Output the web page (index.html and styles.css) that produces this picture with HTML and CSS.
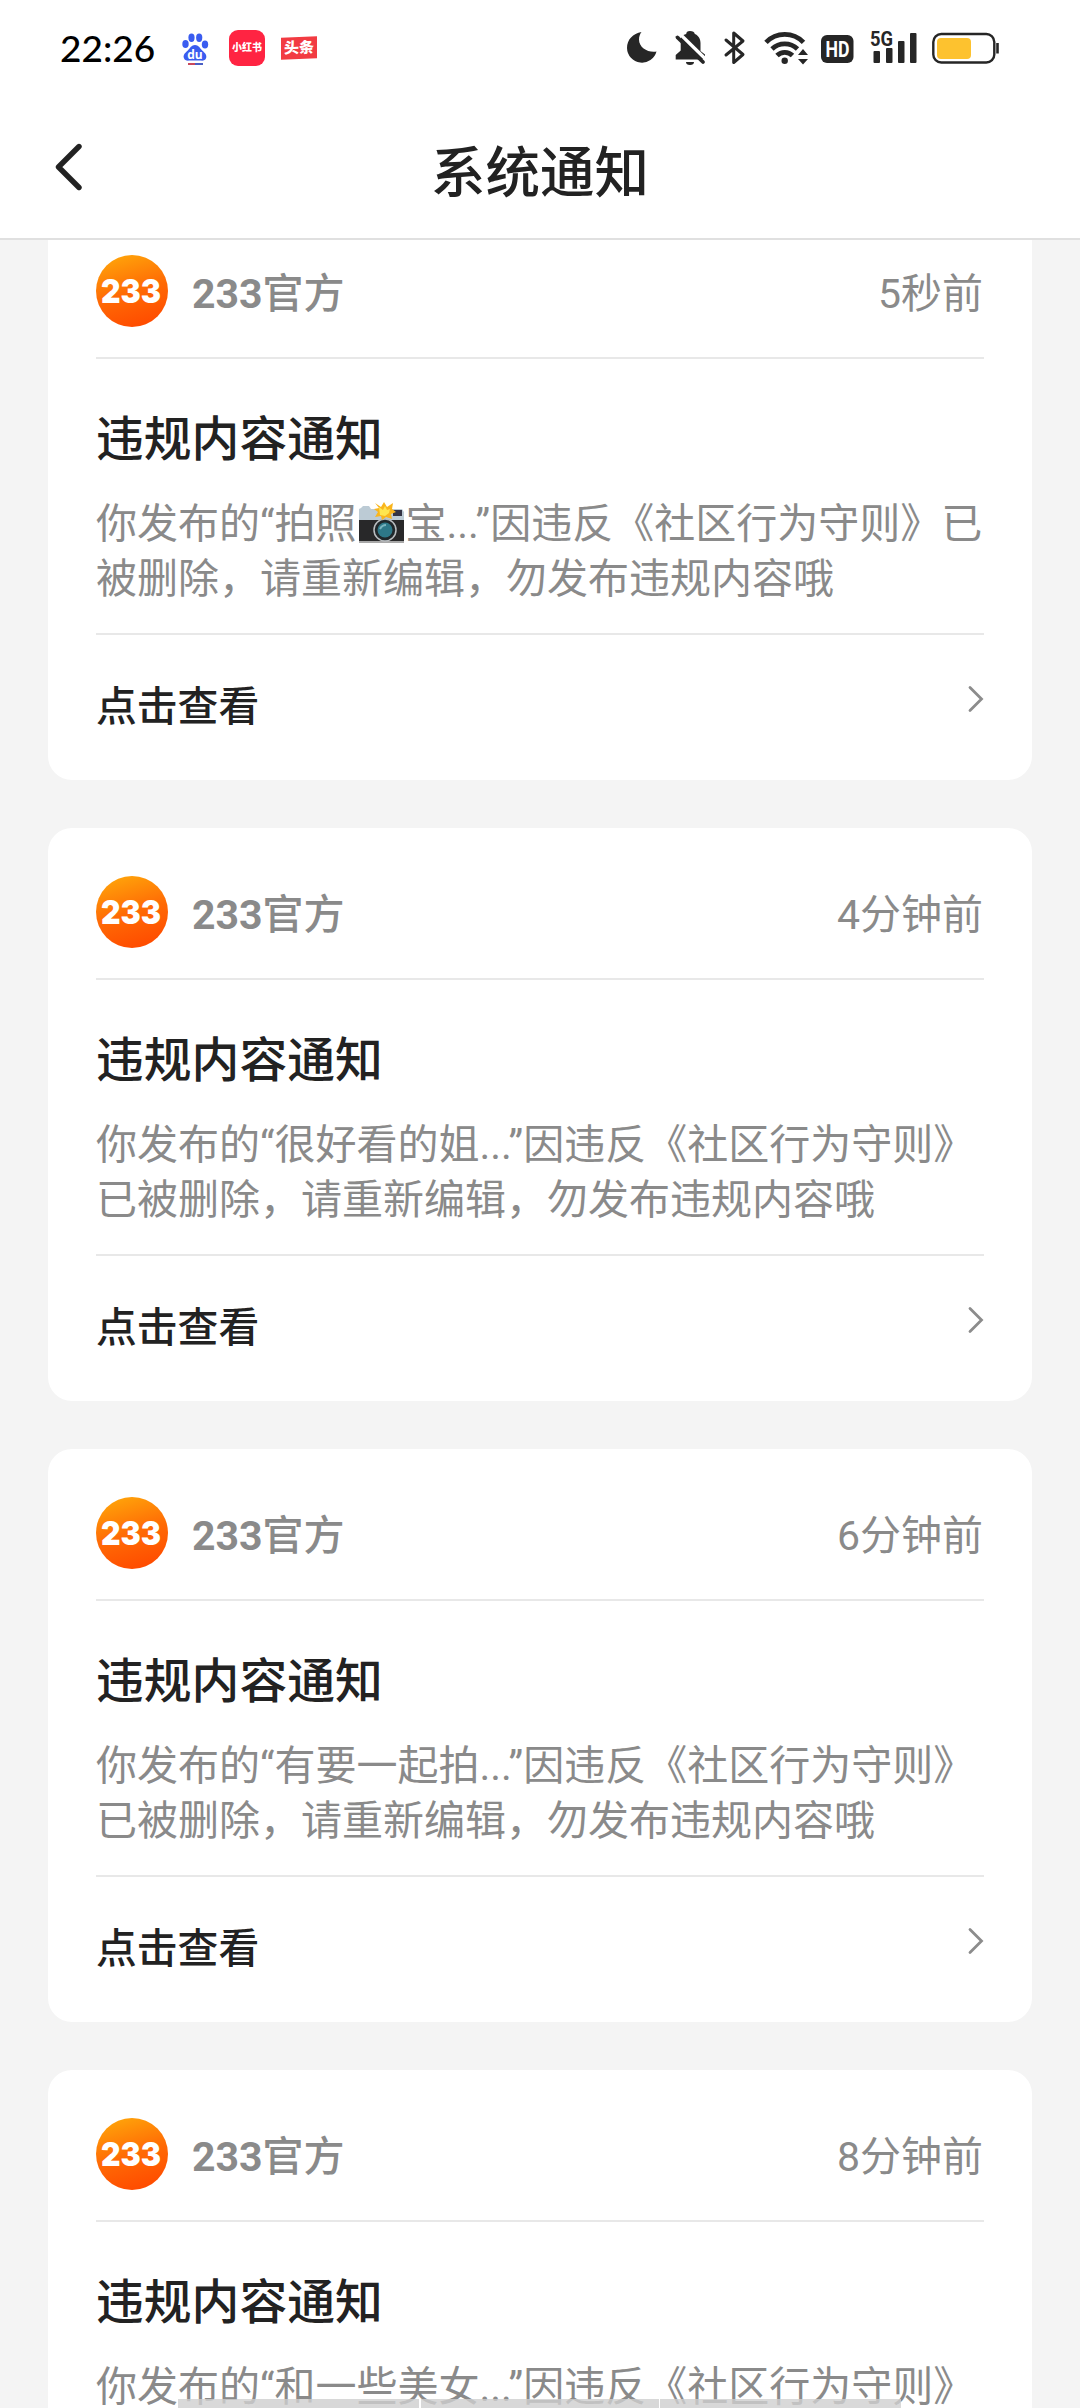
FILE: index.html
```html
<!DOCTYPE html>
<html lang="zh-CN">
<head>
<meta charset="utf-8">
<title>系统通知</title>
<link rel="stylesheet" href="styles.css">
</head>
<body>
<svg class="defs" width="0" height="0" aria-hidden="true">
  <defs>
    <linearGradient id="orange" x1="0.2" y1="0" x2="0.5" y2="1">
      <stop offset="0" stop-color="#ffa60a"/>
      <stop offset="0.55" stop-color="#ff6a05"/>
      <stop offset="1" stop-color="#ff4d00"/>
    </linearGradient>
    <symbol id="next" viewBox="0 0 16 28"><path d="M2 2.5 13.5 14 2 25.5" fill="none" stroke="#8c8c8c" stroke-width="2.8" stroke-linecap="round"/></symbol>
    <symbol id="logo" viewBox="0 0 72 72">
      <circle cx="36" cy="36" r="36" fill="url(#orange)"/>
    </symbol>
  </defs>
</svg>
<div class="screen">
  <header class="statusbar">
    <span class="clock">22:26</span>
    <svg class="app" viewBox="0 0 36 36">
      <g fill="#3a5cf0"><ellipse cx="8.500" cy="14" rx="3.200" ry="4"/><ellipse cx="14.500" cy="7.800" rx="3.100" ry="4.200"/><ellipse cx="22.200" cy="7.800" rx="3.100" ry="4.200"/><ellipse cx="28" cy="14.500" rx="3.200" ry="4"/>
      <path d="M18 15c3.500 0 5 3.200 7.200 5.400 2.500 2.300 4.800 4.200 4 7.400-.8 2.800-3 3-5.500 2.800-3.500-.3-7.900-.3-11.400 0-2.500.2-4.700 0-5.500-2.800-.8-3.200 1.500-5.100 4-7.400C13 18.200 14.500 15 18 15Z"/></g>
      <text x="18" y="29" class="du">du</text>
      <path d="M11 34h7" stroke="#c9485c" stroke-width="2"/><path d="M18 34h8" stroke="#4a5fc4" stroke-width="2"/>
    </svg>
    <span class="app xhs">小红书</span>
    <span class="app toutiao"><b>头条</b></span>
    <svg class="system" viewBox="0 0 380 40">
      <g fill="#262626">
        <path d="M14.500 4C6 5.500 0 11.500 0 20a15 15 0 0 0 29.500 3.500C21.500 25 12 20 12 11.500 12 8.500 13 6 14.500 4Z"/>
        <path d="M54 8.500c1.500-1.200 3.300-2 5.200-2.400C59.400 4 60.300 3 63 3s4.600 1 4.800 3.100C71.500 7.500 73.500 11 73.500 15v8l4.500 3.500V31H54Z"/>
        <path d="M48.700 31.500v-4.500l5-4.500V12l6 6L75 31.500Z"/><path d="M59 34h8a4 3 0 0 1-8 0Z"/>
      </g>
      <path d="M52 5 80 32.500" stroke="#fff" stroke-width="3.200"/><path d="M50.500 9.500 76 34" stroke="#262626" stroke-width="3.800" stroke-linecap="round"/>
      <path d="m99 12 17 14.500-9.300 8V5l9.300 8-17 14" fill="none" stroke="#262626" stroke-width="3" stroke-linejoin="round" stroke-linecap="round"/>
      <g fill="none" stroke="#262626" stroke-width="4.800"><path d="M139 14.300a26 26 0 0 1 37.500 0"/><path d="M145 21a18.500 18.500 0 0 1 25.500 0"/><path d="M150 27.500a11 11 0 0 1 15.500 0"/></g>
      <g fill="#262626"><circle cx="157.700" cy="32.700" r="3.200"/><path d="m171 27 5-6 5 6ZM171 31h10l-5 5.500Z"/>
        <rect x="194" y="7" width="32.500" height="28" rx="6"/>
        <rect x="246.500" y="23" width="6.500" height="12" rx="1"/><rect x="259" y="20" width="6.500" height="15" rx="1"/><rect x="271" y="13" width="6.500" height="22" rx="1"/><rect x="283" y="5" width="6.500" height="30" rx="1"/></g>
      <text x="210.500" y="29" class="hd" textLength="24" lengthAdjust="spacingAndGlyphs">HD</text>
      <text x="254.500" y="18" class="fiveg" textLength="23" lengthAdjust="spacingAndGlyphs">5G</text>
      <rect x="306.300" y="6" width="61" height="28.500" rx="8" fill="#fff" stroke="#262626" stroke-width="2.400"/>
      <rect x="310" y="10" width="34" height="21" rx="4" fill="#fdc22f"/><path d="M370.500 15v10.500" stroke="#262626" stroke-width="2.600"/>
    </svg>
  </header>
  <nav class="titlebar">
    <svg class="back" viewBox="0 0 28 48"><path d="M24 3.500 3.500 24 24 44.500" fill="none" stroke="#222" stroke-width="5.400" stroke-linecap="round" stroke-linejoin="round"/></svg>
    <h1>系统通知</h1>
  </nav>
  <main class="list">
    <article class="card">
      <div class="head"><span class="avatar"><svg viewBox="0 0 72 72"><use href="#logo"/><text x="35" y="48" class="mark" textLength="60" lengthAdjust="spacingAndGlyphs">233</text></svg></span><span class="name"><b>233</b>官方</span><time>5秒前</time></div>
      <div class="content"><h2>违规内容通知</h2><p>你发布的“拍照<svg class="emoji" viewBox="0 0 45 42"><path d="M2 6 4 4h6l2 3h31l2 3v10H0V7Z" fill="#bccbd5"/><path d="M0 18h45v22H0Z" fill="#282829"/><path d="M0 39h45v2H0Z" fill="#a8a8a8"/><rect x="34" y="8" width="9" height="6" fill="#334"/><circle cx="26" cy="28" r="11" fill="#20282b" stroke="#b9bdc0" stroke-width="1.500"/><circle cx="26" cy="28" r="7.500" fill="#2d7888"/><path d="M21 27q2-4 6-4" stroke="#79b5bf" stroke-width="2" fill="none"/><path d="m16 1 6 4 3-5 3 5 6-4-1 6 4 3-5 2 1 5-6-2-4 3-1-4-6 1 3-5-4-3 5-1Z" fill="#f9b51d"/><path d="m20 5 4 3 2-4 2 4 3-1-1 4-4 3-5-1Z" fill="#ffe64f"/></svg>宝...”因违反《社区行为守则》已<br>被删除，请重新编辑，勿发布违规内容哦</p></div>
      <div class="more"><span>点击查看</span><svg><use href="#next"/></svg></div>
    </article>
    <article class="card">
      <div class="head"><span class="avatar"><svg viewBox="0 0 72 72"><use href="#logo"/><text x="35" y="48" class="mark" textLength="60" lengthAdjust="spacingAndGlyphs">233</text></svg></span><span class="name"><b>233</b>官方</span><time>4分钟前</time></div>
      <div class="content"><h2>违规内容通知</h2><p>你发布的“很好看的姐...”因违反《社区行为守则》<br>已被删除，请重新编辑，勿发布违规内容哦</p></div>
      <div class="more"><span>点击查看</span><svg><use href="#next"/></svg></div>
    </article>
    <article class="card">
      <div class="head"><span class="avatar"><svg viewBox="0 0 72 72"><use href="#logo"/><text x="35" y="48" class="mark" textLength="60" lengthAdjust="spacingAndGlyphs">233</text></svg></span><span class="name"><b>233</b>官方</span><time>6分钟前</time></div>
      <div class="content"><h2>违规内容通知</h2><p>你发布的“有要一起拍...”因违反《社区行为守则》<br>已被删除，请重新编辑，勿发布违规内容哦</p></div>
      <div class="more"><span>点击查看</span><svg><use href="#next"/></svg></div>
    </article>
    <article class="card">
      <div class="head"><span class="avatar"><svg viewBox="0 0 72 72"><use href="#logo"/><text x="35" y="48" class="mark" textLength="60" lengthAdjust="spacingAndGlyphs">233</text></svg></span><span class="name"><b>233</b>官方</span><time>8分钟前</time></div>
      <div class="content"><h2>违规内容通知</h2><p>你发布的“和一些美女...”因违反《社区行为守则》</p></div>
    </article>
  </main>
  <div class="gesture"><i></i><i></i><i></i></div>
</div>
</body>
</html>
```
FILE: styles.css
```css
* { box-sizing: border-box; }
body { margin: 0; background: #f4f4f4; font-family: Roboto, "Noto Sans CJK SC", sans-serif; color: #222; }
.defs { position: absolute; }
.screen { position: relative; width: 1080px; height: 2408px; overflow: hidden; display: flex; flex-direction: column; }
.statusbar { height: 96px; flex: none; background: #fff; display: flex; align-items: center; padding-left: 60px; }
.clock { width: 118px; font: 500 37px/96px Lato, sans-serif; color: #000; white-space: nowrap; }
.app { width: 36px; height: 36px; margin-right: 16px; flex: none; }
.du { font: bold 12px "Open Sans", sans-serif; fill: #fff; text-anchor: middle; }
.xhs { background: #ff2442; border-radius: 9px; color: #fff; font-size: 10px; font-weight: 900; line-height: 36px; text-align: center; white-space: nowrap; }
.toutiao { display: flex; align-items: center; }
.toutiao b { width: 36px; height: 22px; background: #f23b42; color: #fff; font-size: 15px; font-weight: 900; line-height: 22px; text-align: center; white-space: nowrap; transform: skewY(-2deg); }
.system { width: 380px; height: 40px; margin-left: 294px; flex: none; }
.statusbar .app:first-of-type { margin-left: -1px; }
.hd { font: bold 22px Roboto, sans-serif; fill: #fff; text-anchor: middle; }
.fiveg { font: bold 20px Roboto, sans-serif; fill: #262626; stroke: #fff; stroke-width: 3px; paint-order: stroke; text-anchor: middle; }
.titlebar { height: 144px; flex: none; background: #fff; border-bottom: 2px solid #e0e0e0; display: grid; grid-template-columns: 84px 1fr 84px; align-items: center; position: relative; z-index: 1; }
.back { width: 28px; height: 48px; margin: 0 0 1px 55px; }
h1 { margin: 12px 0 0; text-align: center; font-size: 54.5px; line-height: 80px; font-weight: 500; }
.list { display: flex; flex-direction: column; gap: 48px; padding: 0 48px; margin-top: -33px; }
.card { flex: none; height: 573px; background: #fff; border-radius: 24px; padding: 0 48px; }
.head { height: 152px; padding-top: 24px; border-bottom: 2px solid #e8e8e8; display: flex; align-items: center; color: #8a8a8a; padding-bottom: 6px; }
.avatar, .avatar svg { display: block; width: 72px; height: 72px; }
.mark { font: 900 33px Inter, Roboto, sans-serif; fill: #fff; text-anchor: middle; }
.name { margin-left: 24px; margin-top: -2px; font-size: 41px; font-weight: 500; }
.name b { font-weight: 700; }
time { margin: -2px 1px 0 auto; font-size: 41px; }
.content { height: 276px; padding-top: 45px; border-bottom: 2px solid #e8e8e8; }
h2 { margin: 0; font-size: 47.8px; line-height: 72px; font-weight: 500; }
p { margin: 21px 0 0; font-size: 41px; line-height: 54.5px; color: #8a8a8a; white-space: nowrap; }
.emoji { width: 45px; height: 42px; margin: -4px 2px 0 2px; vertical-align: -6px; }
.more { display: flex; justify-content: space-between; font-size: 40.8px; line-height: 60px; font-weight: 500; padding-top: 42px; }
.more svg { width: 16px; height: 28px; margin-top: 8px; }
.gesture { position: absolute; left: 178px; bottom: 0; width: 723px; height: 9px; display: grid; grid-template-columns: 241px 238px 1fr; gap: 1.500px; opacity: .8; }
.gesture i { background: #cfcfcf; }
```
